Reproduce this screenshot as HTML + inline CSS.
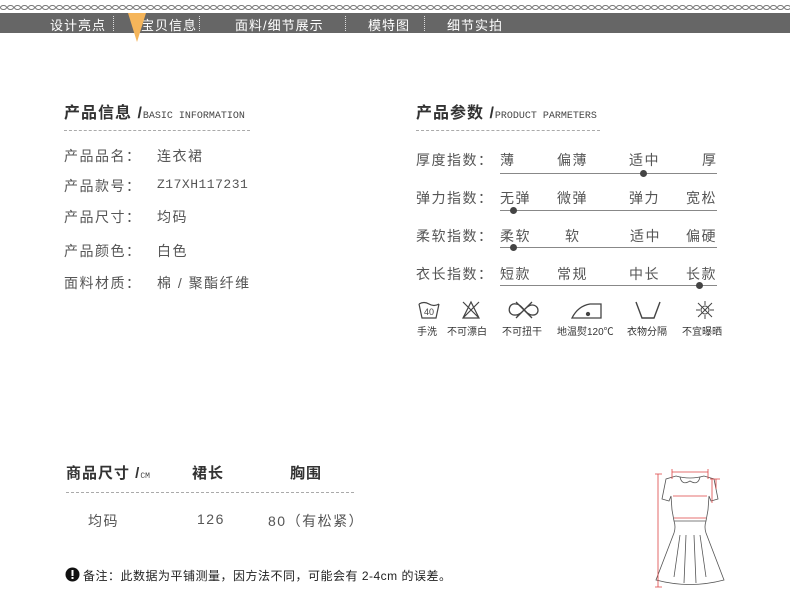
<!DOCTYPE html>
<html><head><meta charset="utf-8"><style>
*{margin:0;padding:0;box-sizing:border-box}
body{width:790px;height:596px;background:#fff;position:relative;overflow:hidden;font-family:"Liberation Sans","Noto Sans CJK SC",sans-serif;color:#555}
.a{position:absolute;white-space:nowrap}
.nav{position:absolute;left:0;top:13px;width:790px;height:20px;background:#666}
.nav span{position:absolute;top:2px;color:#fff;font-size:13px;letter-spacing:1px}
.sep{position:absolute;top:3px;width:0;height:15px;border-left:1px dotted #ddd}
.t{font-size:16px;color:#333;font-weight:bold;letter-spacing:1px}
.sub{font-family:"Liberation Mono",monospace;font-size:10px;color:#444;font-weight:normal;letter-spacing:0}
.dash{position:absolute;height:0;border-top:1px dashed #aaa}
.l{font-size:14px;color:#555;letter-spacing:1.5px}
.line{position:absolute;height:1px;background:#888;left:500px;width:217px}
.dot{position:absolute;width:7px;height:7px;border-radius:50%;background:#444}
.ic{position:absolute;top:300px}
.cap{position:absolute;top:323px;font-size:10px;color:#333}
</style></head><body>
<svg class="a" style="left:0;top:3px" width="790" height="9"><defs><pattern id="p" width="7" height="9" patternUnits="userSpaceOnUse"><ellipse cx="3.5" cy="4.5" rx="3" ry="2" fill="none" stroke="#777" stroke-width="1"/></pattern></defs><rect width="790" height="9" fill="url(#p)"/></svg>
<div class="nav">
<span style="left:50px">设计亮点</span>
<div class="sep" style="left:113px"></div>
<span style="left:141px">宝贝信息</span>
<div class="sep" style="left:199px"></div>
<span style="left:235px">面料/细节展示</span>
<div class="sep" style="left:345px"></div>
<span style="left:368px">模特图</span>
<div class="sep" style="left:424px"></div>
<span style="left:447px">细节实拍</span>
</div>
<svg class="a" style="left:128px;top:13px" width="18" height="30"><polygon points="0,0 18,0 9,29" fill="#f5b55a"/></svg>

<div class="a t" style="left:64px;top:99px">产品信息 /<span class="sub">BASIC INFORMATION</span></div>
<div class="dash" style="left:64px;top:130px;width:186px"></div>
<div class="a l" style="left:64px;top:146px">产品品名：</div><div class="a l" style="left:157px;top:146px">连衣裙</div>
<div class="a l" style="left:64px;top:176px">产品款号：</div><div class="a l" style="left:157px;top:177px;font-family:'Liberation Mono',monospace;font-size:13px;letter-spacing:0.5px">Z17XH117231</div>
<div class="a l" style="left:64px;top:207px">产品尺寸：</div><div class="a l" style="left:157px;top:207px">均码</div>
<div class="a l" style="left:64px;top:241px">产品颜色：</div><div class="a l" style="left:157px;top:241px">白色</div>
<div class="a l" style="left:64px;top:273px">面料材质：</div><div class="a l" style="left:157px;top:273px">棉 / 聚酯纤维</div>

<div class="a t" style="left:416px;top:99px">产品参数 /<span class="sub">PRODUCT PARMETERS</span></div>
<div class="dash" style="left:416px;top:130px;width:184px"></div>

<div class="a l" style="left:416px;top:150px">厚度指数：</div>
<div class="a l" style="left:500px;top:150px">薄</div><div class="a l" style="left:557px;top:150px">偏薄</div><div class="a l" style="left:629px;top:150px">适中</div><div class="a l" style="left:702px;top:150px">厚</div>
<div class="line" style="top:173px"></div><div class="dot" style="left:640px;top:170px"></div>

<div class="a l" style="left:416px;top:188px">弹力指数：</div>
<div class="a l" style="left:500px;top:188px">无弹</div><div class="a l" style="left:557px;top:188px">微弹</div><div class="a l" style="left:629px;top:188px">弹力</div><div class="a l" style="left:686px;top:188px">宽松</div>
<div class="line" style="top:210px"></div><div class="dot" style="left:510px;top:207px"></div>

<div class="a l" style="left:416px;top:226px">柔软指数：</div>
<div class="a l" style="left:500px;top:226px">柔软</div><div class="a l" style="left:565px;top:226px">软</div><div class="a l" style="left:630px;top:226px">适中</div><div class="a l" style="left:686px;top:226px">偏硬</div>
<div class="line" style="top:247px"></div><div class="dot" style="left:510px;top:244px"></div>

<div class="a l" style="left:416px;top:264px">衣长指数：</div>
<div class="a l" style="left:500px;top:264px">短款</div><div class="a l" style="left:557px;top:264px">常规</div><div class="a l" style="left:629px;top:264px">中长</div><div class="a l" style="left:686px;top:264px">长款</div>
<div class="line" style="top:285px"></div><div class="dot" style="left:696px;top:282px"></div>

<svg class="ic" style="left:418px" width="22" height="20" fill="none" stroke="#444" stroke-width="1.2"><path d="M1 4 L4 18 H18 L21 4 M1 4 Q6 1 11 4 Q16 7 21 4"/><text x="6" y="15" font-size="9" fill="#444" stroke="none">40</text></svg>
<svg class="ic" style="left:460px" width="22" height="20" fill="none" stroke="#444" stroke-width="1.2"><path d="M3 18 L11 2 L19 18 Z M3 2 L19 18 M19 2 L3 18"/></svg>
<svg class="ic" style="left:504px" width="40" height="20" fill="none" stroke="#444" stroke-width="1.3"><path d="M12 4 C4 2 2 16 12 15 C18 15 22 5 28 5 C36 5 36 16 28 15 C22 15 18 4 12 4 Z M12 2 L28 18 M28 2 L12 18"/></svg>
<svg class="ic" style="left:570px" width="34" height="20" fill="none" stroke="#444" stroke-width="1.3"><path d="M2 18 H31 V4 H20 Q8 6 2 18 Z"/><circle cx="18" cy="14" r="1.5" fill="#444"/></svg>
<svg class="ic" style="left:634px" width="28" height="20" fill="none" stroke="#444" stroke-width="1.4"><path d="M2 2 L8 18 H20 L26 2"/></svg>
<svg class="ic" style="left:695px" width="20" height="20" fill="none" stroke="#444" stroke-width="1"><circle cx="10" cy="10" r="4"/><path d="M10 1 V5 M10 15 V19 M1 10 H5 M15 10 H19 M3 3 L17 17 M17 3 L3 17"/></svg>
<div class="cap" style="left:417px">手洗</div>
<div class="cap" style="left:447px">不可漂白</div>
<div class="cap" style="left:502px">不可扭干</div>
<div class="cap" style="left:557px">地温熨120℃</div>
<div class="cap" style="left:627px">衣物分隔</div>
<div class="cap" style="left:682px">不宜曝晒</div>

<div class="a t" style="left:66px;top:462px;font-size:15px">商品尺寸 /<span class="sub" style="font-size:8px">CM</span></div>
<div class="a t" style="left:192px;top:462px;font-size:15px">裙长</div>
<div class="a t" style="left:290px;top:462px;font-size:15px">胸围</div>
<div class="dash" style="left:66px;top:492px;width:288px"></div>
<div class="a l" style="left:88px;top:511px">均码</div>
<div class="a l" style="left:197px;top:511px">126</div>
<div class="a l" style="left:268px;top:511px">80（有松紧）</div>

<svg class="a" style="left:65px;top:567px" width="15" height="15"><circle cx="7.5" cy="7.5" r="7" fill="#111"/><rect x="6.5" y="3" width="2" height="6" fill="#fff"/><rect x="6.5" y="10" width="2" height="2" fill="#fff"/></svg>
<div class="a" style="left:83px;top:567px;font-size:12px;color:#222;letter-spacing:0.5px">备注：此数据为平铺测量，因方法不同，可能会有 2-4cm 的误差。</div>

<svg class="a" style="left:648px;top:465px" width="85" height="125" fill="none" stroke="#555" stroke-width="0.8">
<path d="M28 11 Q42 15 56 11 L66 14 L70 34 L63 36 L61 31 L60 45 L58 56 Q56 62 58 68 L76 115 Q42 124 8 115 L26 68 Q28 62 26 56 L24 45 L23 31 L21 36 L14 34 L18 14 Z"/>
<path d="M32 12 Q34 21 42 16 Q50 21 52 12"/>
<path d="M26 56 H58 M32 70 L26 112 M38 70 L36 118 M46 70 L48 118 M52 70 L58 112"/>
<g stroke="#d44" stroke-width="0.8"><path d="M24 7 H60 M24 4 V14 M60 4 V14 M25 31 H59 M26 53 H58 M10 9 V122 M7 9 H14 M7 122 H14 M64 14 V38 M62 14 H72 M68 14 V24"/></g>
</svg>
</body></html>
